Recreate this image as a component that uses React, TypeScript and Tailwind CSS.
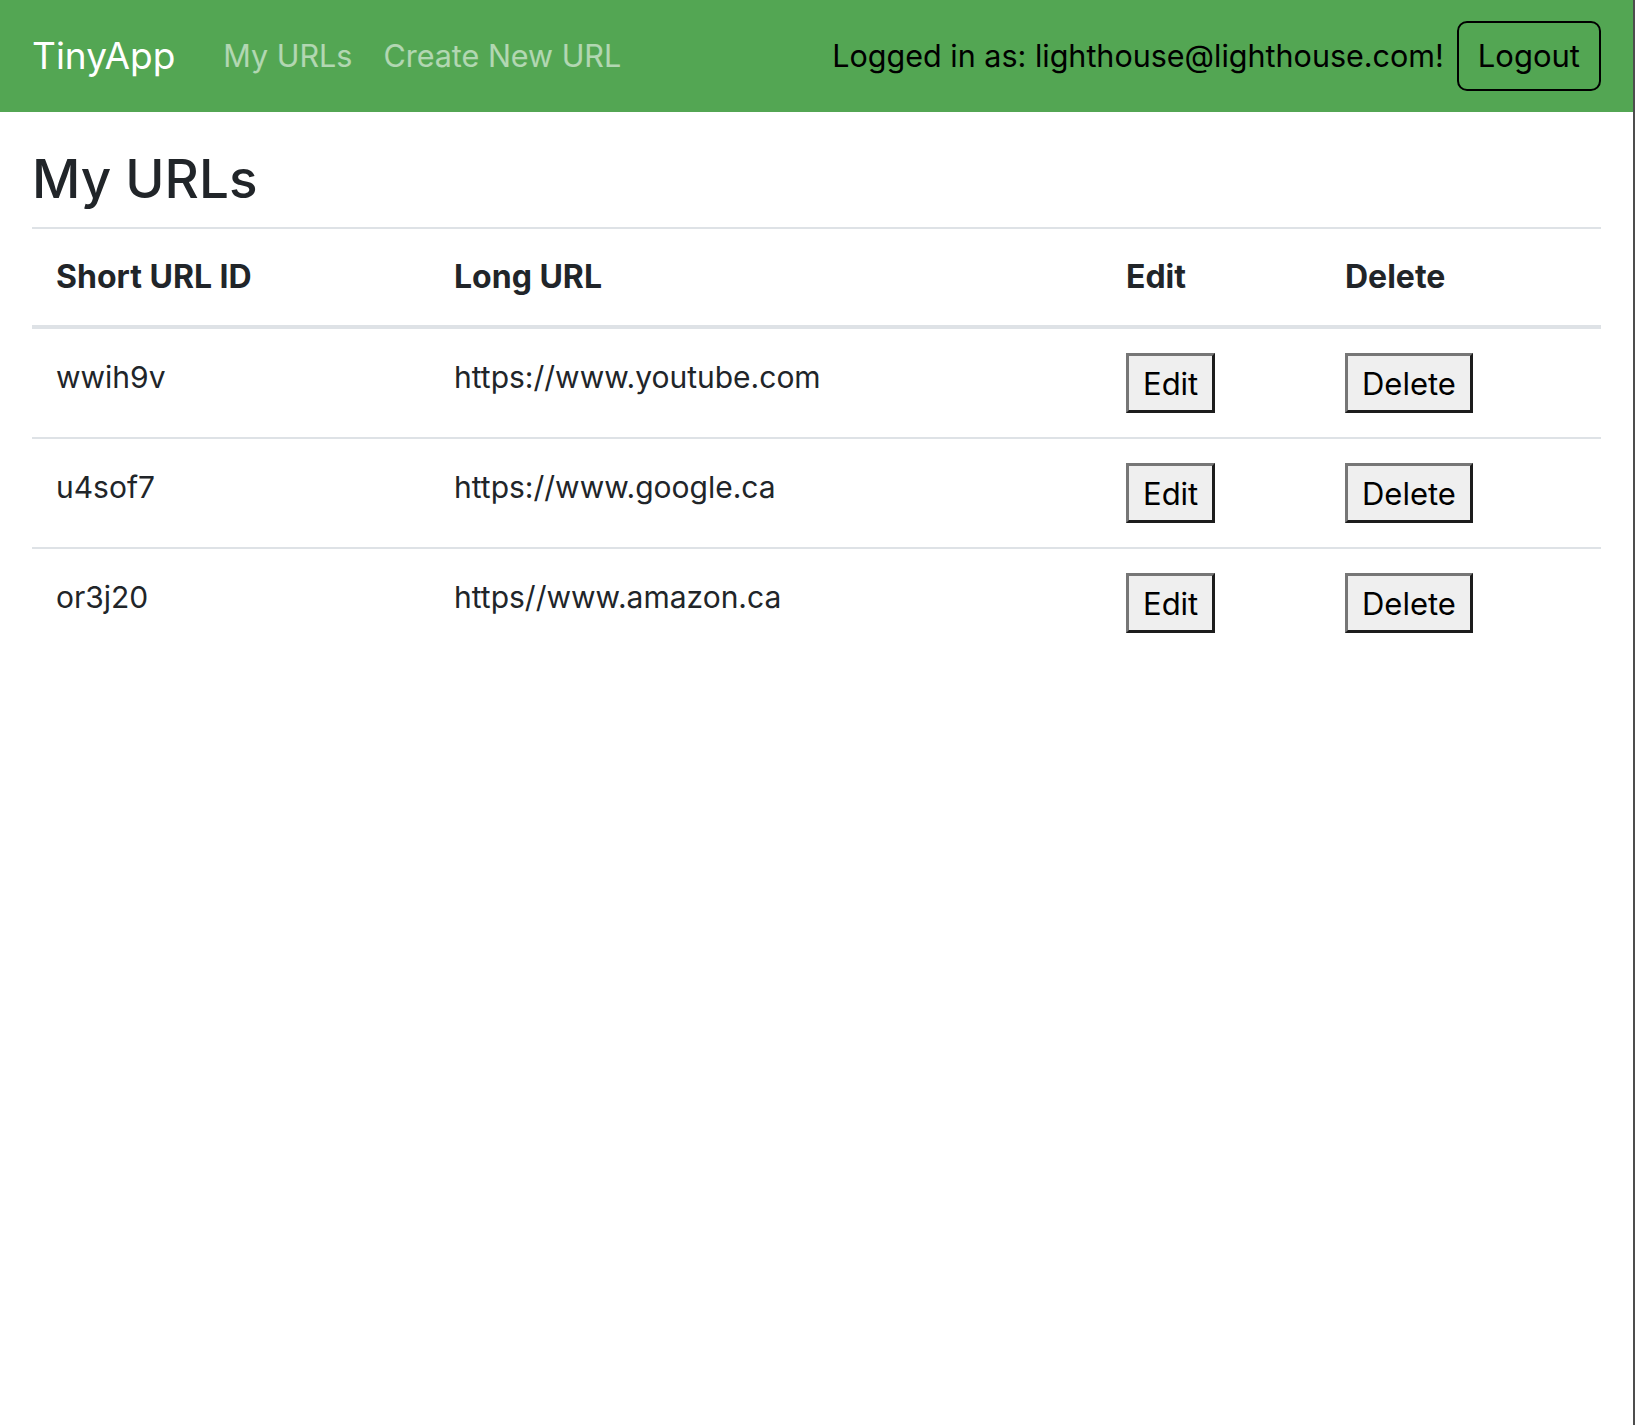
import React from "react";

const urls = [
  { id: "wwih9v", long: "https://www.youtube.com" },
  { id: "u4sof7", long: "https://www.google.ca" },
  { id: "or3j20", long: "https//www.amazon.ca" },
];

const OldButton = ({ label }: { label: string }) => (
  <button className="h-[60px] px-[14px] bg-[#efefef] text-black text-[31px] leading-none border-[3px] border-t-[#767676] border-l-[#767676] border-b-[#1c1c1c] border-r-[#1c1c1c]">
    {label}
  </button>
);

const App = () => {
  return (
    <div
      className="min-h-screen bg-white border-r-2 border-[#4d4d4d] text-[#212529]"
      style={{ fontFamily: "Inter, 'Noto Sans', sans-serif" }}
    >
      {/* Navbar */}
      <nav className="h-[112px] bg-[#53a653] px-[32px] flex items-center">
        <span className="text-[37px] text-white mr-[48px]">TinyApp</span>
        <div className="flex items-center gap-[31px] text-[30.5px] text-white/55">
          <a href="#">My URLs</a>
          <a href="#">Create New URL</a>
        </div>
        <div className="ml-auto flex items-center gap-[13px]">
          <span className="text-[30.5px] text-black">Logged in as: lighthouse@lighthouse.com!</span>
          <button className="h-[70px] px-[19px] border-2 border-black rounded-[10px] text-[31px] text-black">
            Logout
          </button>
        </div>
      </nav>

      {/* Content */}
      <main className="px-[32px]">
        <h1 className="mt-[34px] mb-[14px] text-[53px] leading-[67px] font-medium">My URLs</h1>
        <table className="w-full table-fixed border-collapse text-left">
          <thead>
            <tr className="border-t-2 border-b-4 border-[#dee2e6]">
              <th className="w-[398px] px-[24px] py-[24px] text-[32px] leading-[48px] font-bold">Short URL ID</th>
              <th className="w-[672px] px-[24px] py-[24px] text-[32px] leading-[48px] font-bold">Long URL</th>
              <th className="w-[219px] px-[24px] py-[24px] text-[32px] leading-[48px] font-bold">Edit</th>
              <th className="px-[24px] py-[24px] text-[32px] leading-[48px] font-bold">Delete</th>
            </tr>
          </thead>
          <tbody>
            {urls.map((u, i) => (
              <tr key={u.id} className={i > 0 ? "border-t-2 border-[#dee2e6]" : ""}>
                <td className="align-top px-[24px] py-[24px] text-[30px] leading-[48px]">{u.id}</td>
                <td className="align-top px-[24px] py-[24px] text-[30px] leading-[48px]">{u.long}</td>
                <td className="align-top px-[24px] py-[24px]">
                  <OldButton label="Edit" />
                </td>
                <td className="align-top px-[24px] py-[24px]">
                  <OldButton label="Delete" />
                </td>
              </tr>
            ))}
          </tbody>
        </table>
      </main>
    </div>
  );
};

export default App;
